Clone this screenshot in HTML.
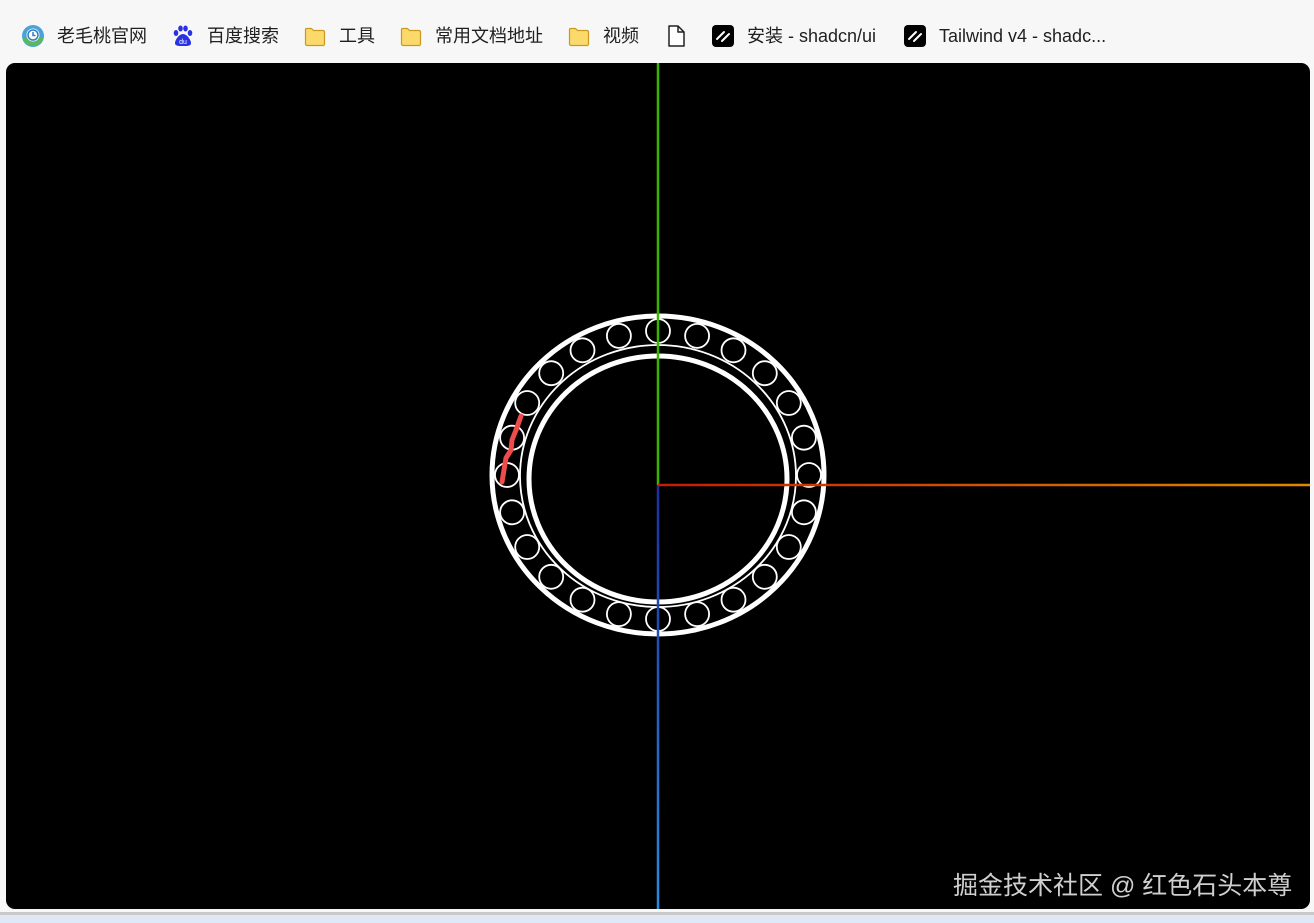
<!DOCTYPE html>
<html><head><meta charset="utf-8"><style>
html,body{margin:0;padding:0;width:1314px;height:923px;overflow:hidden;background:#f7f7f7;font-family:"Liberation Sans","Noto Sans CJK SC",sans-serif}
.bar{position:absolute;left:0;top:0;width:1314px;height:63px}
.bm{position:absolute;top:23px;font-size:18px;color:#1f1f1f;line-height:26px;white-space:nowrap}
.ic{position:absolute;top:24px;width:24px;height:24px}
.panel{position:absolute;left:6px;top:63px;width:1304px;height:846px;background:#000;border-radius:9px;overflow:hidden}
.foot1{position:absolute;left:0;top:912px;width:1314px;height:3px;background:#c9c9c9}
.foot2{position:absolute;left:0;top:915px;width:1314px;height:8px;background:#dfe9f6}
.wm{position:absolute;left:953px;top:866px;font-size:25px;color:#cfcfcf;white-space:nowrap}
</style></head><body>
<div class="bar">
<svg class="ic" style="left:21px" viewBox="0 0 24 24"><circle cx="12" cy="12" r="11" fill="#4aa3d8"/><path d="M1.5 14 A11 11 0 0 0 22.5 14 Z" fill="#5cb85c"/><circle cx="12" cy="11" r="6.5" fill="#fff"/><circle cx="12" cy="11" r="5" fill="none" stroke="#2f80c0" stroke-width="1.5"/><path d="M12 8v3.5h2.5" stroke="#2f80c0" stroke-width="1.5" fill="none"/></svg>
<div class="bm" style="left:57px">老毛桃官网</div>
<svg class="ic" style="left:171px" viewBox="0 0 24 24" fill="#2932e1"><ellipse cx="5" cy="9" rx="2.3" ry="3"/><ellipse cx="9.5" cy="4.5" rx="2.3" ry="3"/><ellipse cx="14.5" cy="4.5" rx="2.3" ry="3"/><ellipse cx="19" cy="9" rx="2.3" ry="3"/><path d="M12 10c-4 0-8 6-8 9 0 3 3 3 8 3s8 0 8-3c0-3-4-9-8-9z"/><text x="12" y="20" font-size="7" fill="#fff" text-anchor="middle" font-family="Liberation Sans">du</text></svg>
<div class="bm" style="left:207px">百度搜索</div>
<svg class="ic" style="left:303px" viewBox="0 0 24 24"><path d="M3 4.5h5.5l2 2H20a1.5 1.5 0 0 1 1.5 1.5v12a1.5 1.5 0 0 1-1.5 1.5H4a1.5 1.5 0 0 1-1.5-1.5V6a1.5 1.5 0 0 1 .5-1.5z" fill="#fbd96b" stroke="#c99a1e" stroke-width="1.2" stroke-linejoin="round"/></svg>
<div class="bm" style="left:339px">工具</div>
<svg class="ic" style="left:399px" viewBox="0 0 24 24"><path d="M3 4.5h5.5l2 2H20a1.5 1.5 0 0 1 1.5 1.5v12a1.5 1.5 0 0 1-1.5 1.5H4a1.5 1.5 0 0 1-1.5-1.5V6a1.5 1.5 0 0 1 .5-1.5z" fill="#fbd96b" stroke="#c99a1e" stroke-width="1.2" stroke-linejoin="round"/></svg>
<div class="bm" style="left:435px">常用文档地址</div>
<svg class="ic" style="left:567px" viewBox="0 0 24 24"><path d="M3 4.5h5.5l2 2H20a1.5 1.5 0 0 1 1.5 1.5v12a1.5 1.5 0 0 1-1.5 1.5H4a1.5 1.5 0 0 1-1.5-1.5V6a1.5 1.5 0 0 1 .5-1.5z" fill="#fbd96b" stroke="#c99a1e" stroke-width="1.2" stroke-linejoin="round"/></svg>
<div class="bm" style="left:603px">视频</div>
<svg class="ic" style="left:664px" viewBox="0 0 24 24"><path d="M5 2h9l6 6v14H5z M14 2v6h6" fill="#fff" stroke="#222" stroke-width="1.5" stroke-linejoin="round"/></svg>
<svg class="ic" style="left:711px" viewBox="0 0 24 24"><rect x="1" y="1" width="22" height="22" rx="4" fill="#000"/><path d="M6 15l7-7M11 17l7-7" stroke="#fff" stroke-width="2" stroke-linecap="round"/></svg>
<div class="bm" style="left:747px">安装 - shadcn/ui</div>
<svg class="ic" style="left:903px" viewBox="0 0 24 24"><rect x="1" y="1" width="22" height="22" rx="4" fill="#000"/><path d="M6 15l7-7M11 17l7-7" stroke="#fff" stroke-width="2" stroke-linecap="round"/></svg>
<div class="bm" style="left:939px">Tailwind v4 - shadc...</div>
</div>
<div class="panel">
<svg width="1304" height="846" viewBox="6 63 1304 846" style="position:absolute;left:0;top:0">
<defs><linearGradient id="rx" x1="658" y1="0" x2="1310" y2="0" gradientUnits="userSpaceOnUse"><stop offset="0" stop-color="#c41e00"/><stop offset="1" stop-color="#e08a00"/></linearGradient>
<linearGradient id="bz" x1="0" y1="485" x2="0" y2="909" gradientUnits="userSpaceOnUse"><stop offset="0" stop-color="#1a2fa0"/><stop offset="1" stop-color="#2a8ae0"/></linearGradient></defs>
<g fill="none" stroke="#fff">
<ellipse cx="658" cy="475" rx="166" ry="159" stroke-width="5"/>
<ellipse cx="658" cy="476" rx="138" ry="131" stroke-width="1.8"/>
<ellipse cx="658" cy="479" rx="129" ry="123" stroke-width="5"/>
<g stroke-width="1.8">
<circle cx="809" cy="475" r="12"/><circle cx="803.9" cy="512.3" r="12"/><circle cx="788.8" cy="547" r="12"/><circle cx="764.8" cy="576.8" r="12"/><circle cx="733.5" cy="599.7" r="12"/><circle cx="697.1" cy="614.1" r="12"/><circle cx="658" cy="619" r="12"/><circle cx="618.9" cy="614.1" r="12"/><circle cx="582.5" cy="599.7" r="12"/><circle cx="551.2" cy="576.8" r="12"/><circle cx="527.2" cy="547" r="12"/><circle cx="512.1" cy="512.3" r="12"/><circle cx="507" cy="475" r="12"/><circle cx="512.1" cy="437.7" r="12"/><circle cx="527.2" cy="403" r="12"/><circle cx="551.2" cy="373.2" r="12"/><circle cx="582.5" cy="350.3" r="12"/><circle cx="618.9" cy="335.9" r="12"/><circle cx="658" cy="331" r="12"/><circle cx="697.1" cy="335.9" r="12"/><circle cx="733.5" cy="350.3" r="12"/><circle cx="764.8" cy="373.2" r="12"/><circle cx="788.8" cy="403" r="12"/><circle cx="803.9" cy="437.7" r="12"/>
</g></g>
<line x1="658" y1="63" x2="658" y2="485" stroke="#3bb400" stroke-width="2.5"/>
<line x1="658" y1="485" x2="658" y2="909" stroke="url(#bz)" stroke-width="2.5"/>
<line x1="658" y1="485" x2="1310" y2="485" stroke="url(#rx)" stroke-width="2.5"/>
<path d="M502 482 L506 458 L511 450 L512 440 L516 430 L521 416" fill="none" stroke="#ee4b4b" stroke-width="5" stroke-linecap="round" stroke-linejoin="round"/>
</svg>
</div>
<div class="wm">掘金技术社区 @ 红色石头本尊</div>
<div class="foot1"></div><div class="foot2"></div>
</body></html>
